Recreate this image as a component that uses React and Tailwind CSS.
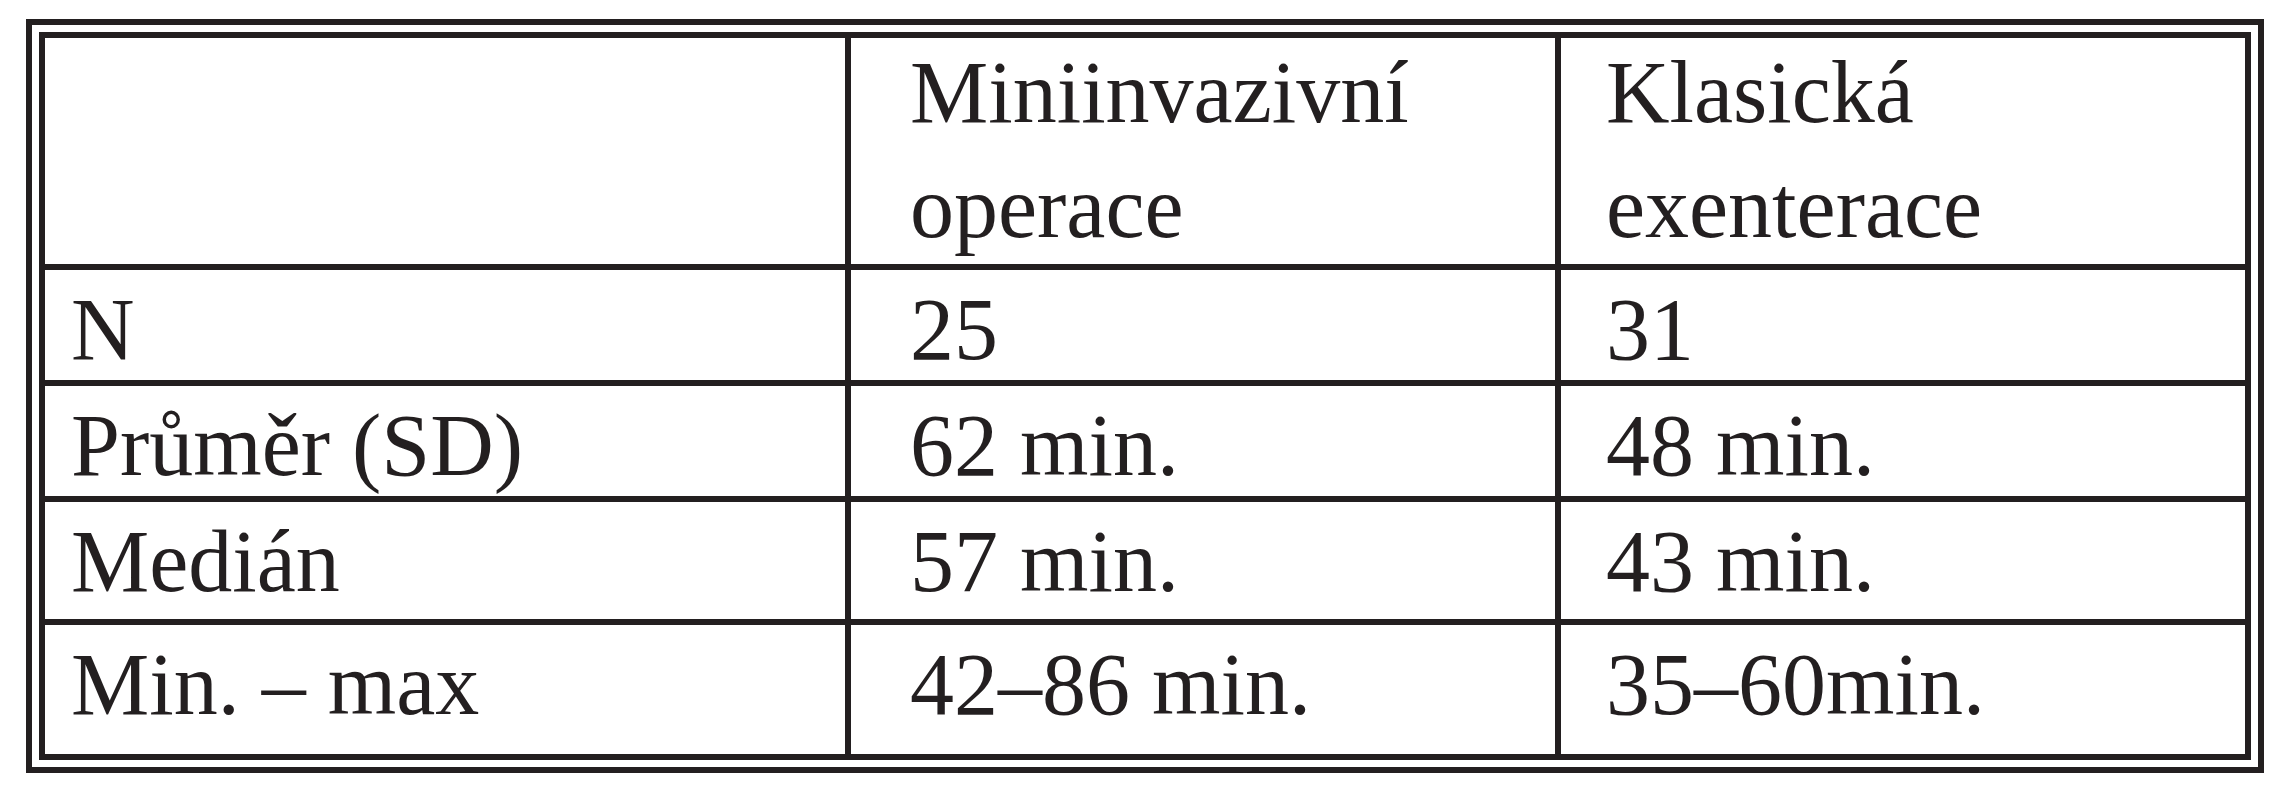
const rows = [
  { label: "N", a: "25", b: "31", h: "h-[110px]" },
  { label: "Průměr (SD)", a: "62 min.", b: "48 min.", h: "h-[110px]" },
  { label: "Medián", a: "57 min.", b: "43 min.", h: "h-[117px]" },
  { label: "Min. – max", a: "42–86 min.", b: "35–60min.", h: "h-[129px]" },
];

export default function App() {
  return (
    <div className="min-h-[800px] w-[2284px] bg-white pt-[19px] pl-[26px]">
      <div className="w-fit border-[6px] border-[#231f20] p-[7px]">
        <div className="grid grid-cols-[800px_704px_684px] gap-[6px] border-[6px] border-[#231f20] bg-[#231f20] font-['Liberation_Serif','Times_New_Roman',serif] text-[88px] leading-[115px] text-[#231f20] whitespace-nowrap">
          {/* header */}
          <div className="h-[226px] bg-white" />
          <div className="h-[226px] bg-white pl-[59px]">
            <div className="-mt-[3px]">
              Miniinvazivní
              <br />
              operace
            </div>
          </div>
          <div className="h-[226px] bg-white pl-[45px]">
            <div className="-mt-[3px]">
              Klasická
              <br />
              exenterace
            </div>
          </div>

          {rows.map((r) => [
            <div key={r.label + "l"} className={`${r.h} bg-white pl-[26px] pt-[2px]`}>
              {r.label}
            </div>,
            <div key={r.label + "a"} className={`${r.h} bg-white pl-[59px] pt-[2px]`}>
              {r.a}
            </div>,
            <div key={r.label + "b"} className={`${r.h} bg-white pl-[45px] pt-[2px]`}>
              {r.b}
            </div>,
          ])}
        </div>
      </div>
    </div>
  );
}
